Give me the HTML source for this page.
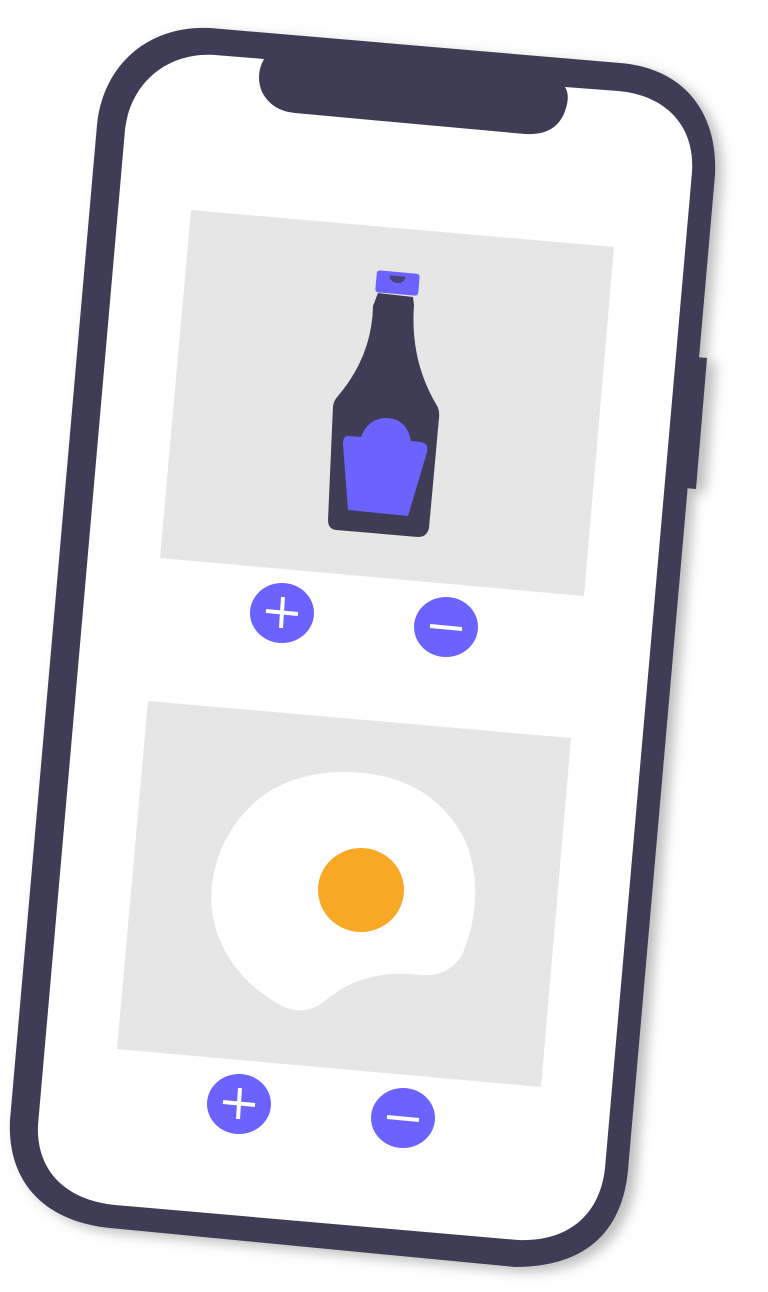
<!DOCTYPE html>
<html><head><meta charset="utf-8"><style>html,body{margin:0;padding:0;background:#fff;width:768px;height:1292px;overflow:hidden}</style></head>
<body>
<svg width="768" height="1292" viewBox="0 0 768 1292" xmlns="http://www.w3.org/2000/svg">
<defs><filter id="b" x="-10%" y="-10%" width="120%" height="120%"><feGaussianBlur stdDeviation="6"/></filter></defs>
<!-- shadow -->
<g filter="url(#b)" opacity="0.55">
<path d="M218,33 L628,68 C690,73 725,115 722,180 L636,1175 C630,1240 590,1272 523,1272 L118,1233 C50,1226 15,1185 17,1125 L104,130 C110,70 155,30 218,33 Z" fill="#888"/>
<path d="M703,362 L716,363 L705,493 L692,492 Z" fill="#888"/>
</g>
<!-- side button -->
<path d="M695,357 L707,358 L696,489 L684,488 Z" fill="#3f3d56"/>
<!-- phone body -->
<path d="M210,28 L620,63 C682,68 718,110 715,175 L628,1170 C622,1235 582,1267 515,1267 L110,1228 C42,1221 7,1180 10,1120 L97,125 C103,65 148,25 210,28 Z" fill="#3f3d56"/>
<!-- screen -->
<path d="M215,55 L264,59 Q255,75 262,92 Q272,111 295,113 L525,134 Q558,136 566,108 Q570,95 565,87 L618,91 C665,95 695,125 692,172 L605,1168 C600,1215 568,1242 518,1240 L115,1205 C65,1200 36,1170 38,1125 L125,130 C130,85 165,52 215,55 Z" fill="#fff"/>
<!-- cards -->
<polygon points="191,210 614,247 584,596 160,558" fill="#e6e6e6"/>
<polygon points="148,701 571,738 541,1087 117,1049" fill="#e6e6e6"/>
<!-- bottle -->
<path d="M378,293 L413,297 L414,305 Q410,360 436,404 Q440,410 439,418 L429,528 Q427,537 418,537 L336,530 Q328,529 328,520 L333,406 Q334,400 338,396 Q372,356 373,306 Z" fill="#3f3d56"/>
<g transform="rotate(5 397 283)"><rect x="376" y="272" width="43" height="22" rx="3" fill="#6c63ff"/><path d="M389,276 A8,7 0 0 0 405,276 Z" fill="#3f3d56" opacity="0.8"/></g>
<path d="M348,436 L361,437 Q368,418 387,418 Q407,419 411,441 L421,442 Q429,444 427,452 L408,516 L348,510 L343,444 Q343,436 348,436 Z" fill="#6c63ff"/>
<!-- buttons -->
<g fill="#6c63ff"><ellipse cx="282" cy="613" rx="32" ry="30"/><ellipse cx="446" cy="627" rx="32" ry="30"/><ellipse cx="239" cy="1104" rx="32" ry="30"/><ellipse cx="403" cy="1118" rx="32" ry="30"/></g>
<g stroke="#fff" stroke-width="4" stroke-linecap="butt">
<line x1="266" y1="611" x2="298" y2="614"/><line x1="283" y1="597" x2="281" y2="628"/>
<line x1="430" y1="626" x2="462" y2="629"/>
<line x1="223" y1="1102" x2="255" y2="1105"/><line x1="240" y1="1088" x2="238" y2="1119"/>
<line x1="387" y1="1117" x2="419" y2="1120"/>
</g>
<!-- egg -->
<path d="M343,772 Q430,772 465,840 Q487,895 462,955 Q448,977 422,975 Q363,968 326,1000 Q306,1017 282,1006 Q240,983 222,945 Q200,898 223,845 Q258,773 343,772 Z" fill="#fff"/>
<ellipse cx="361" cy="890" rx="43" ry="42" fill="#f9a826"/>
</svg>
</body></html>
